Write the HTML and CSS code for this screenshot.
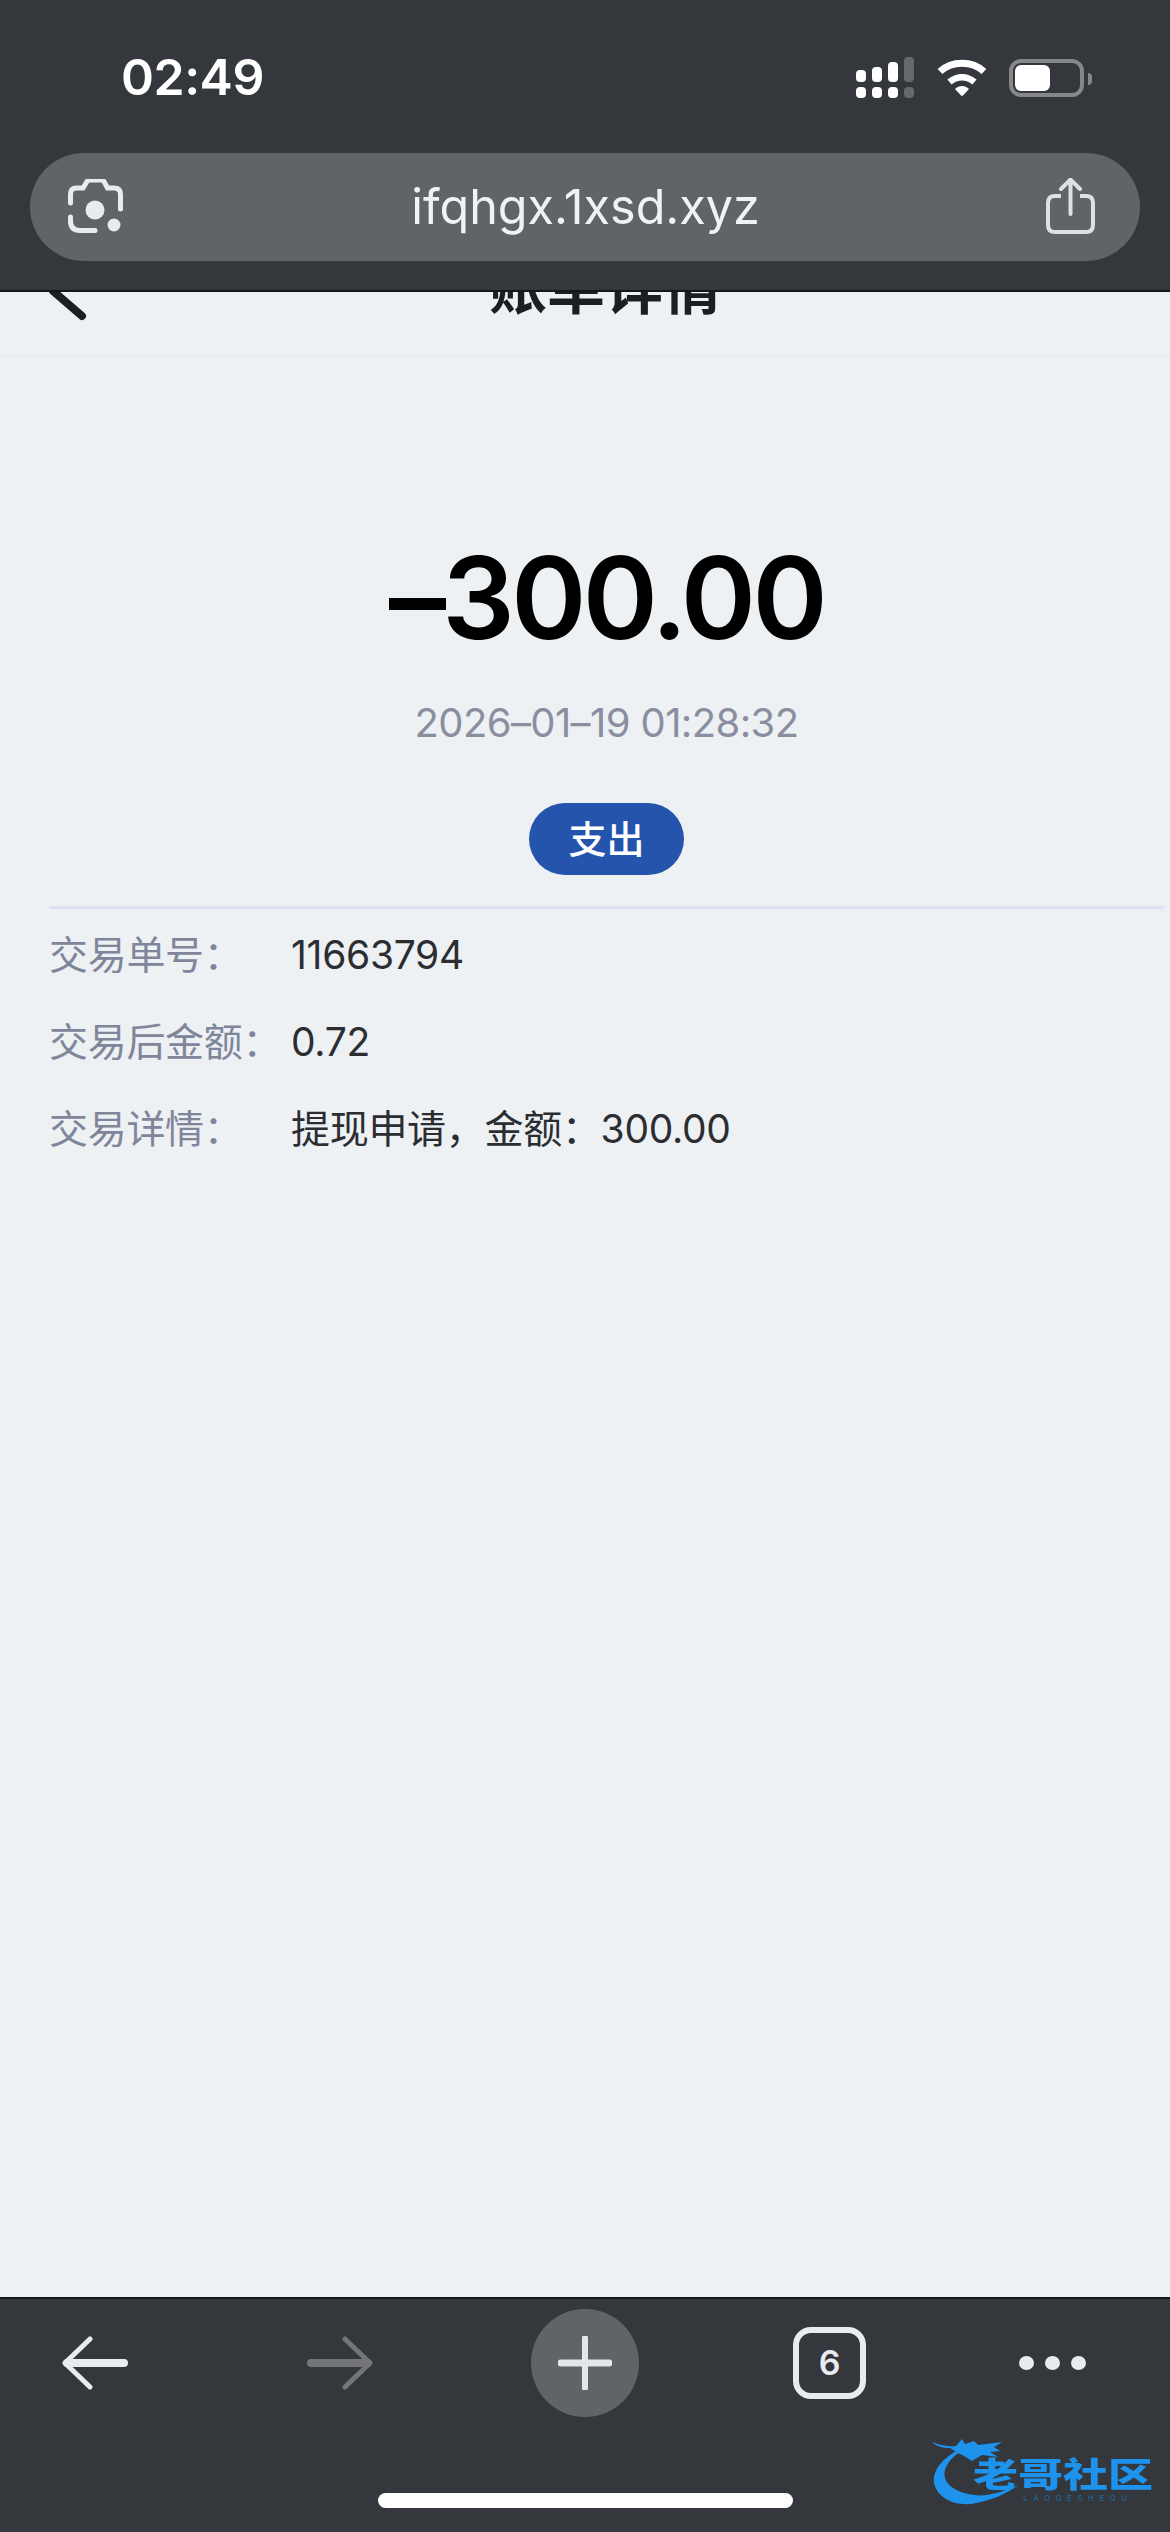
FILE: index.html
```html
<!DOCTYPE html>
<html lang="zh-CN">
<head>
    <meta charset="UTF-8">
    <meta name="viewport" content="width=device-width, initial-scale=1.0">
    <title>账单详情</title>
    <link rel="stylesheet" href="styles.css">
</head>
<body>
    <div class="phone">
        <header class="chrome-top">
            <div class="status-bar">
                <span class="clock">02:49</span>
                <div class="status-icons">
                    <svg class="signal" width="58" height="41" viewBox="0 0 58 41">
                        <rect x="0" y="13" width="10" height="12" rx="4" fill="#fff"/>
                        <rect x="16" y="10" width="10" height="15" rx="4" fill="#fff"/>
                        <rect x="32" y="5" width="10" height="20" rx="4" fill="#fff"/>
                        <rect x="48" y="0" width="10" height="25" rx="4" fill="#65686c"/>
                        <rect x="0" y="30" width="10" height="11" rx="4" fill="#fff"/>
                        <rect x="16" y="30" width="10" height="11" rx="4" fill="#fff"/>
                        <rect x="32" y="30" width="10" height="11" rx="4" fill="#fff"/>
                        <rect x="48" y="30" width="10" height="11" rx="4" fill="#65686c"/>
                    </svg>
                    <svg class="wifi" width="50" height="37" viewBox="0 0 50 37">
                        <path d="M3 12.5 C15 1.5 35 1.5 47 12.5" fill="none" stroke="#fff" stroke-width="7"/>
                        <path d="M12.5 23 C20 16.5 30 16.5 37.500 23" fill="none" stroke="#fff" stroke-width="6.500"/>
                        <path d="M18 30 C22 26 28 26 32 30 L26 36.500 Q25 37 24 36.500 Z" fill="#fff"/>
                    </svg>
                    <div class="battery">
                        <div class="battery-level"></div>
                    </div>
                </div>
            </div>
            <div class="url-bar">
                <svg class="lens" width="55" height="54" viewBox="0 0 55 54">
                    <path d="M2.500 24 V15 Q2.500 9 8.500 9 H15 L19 2.500 Q20 1 22 1 H33 Q35 1 36 2.500 L39.500 9 H46 Q52.500 9 52.500 15 V30" fill="none" stroke="#e8ebef" stroke-width="5" stroke-linecap="round"/>
                    <path d="M2.500 38 V42 Q2.500 51.500 12 51.500 H27" fill="none" stroke="#e8ebef" stroke-width="5" stroke-linecap="round"/>
                    <circle cx="27" cy="31" r="9.500" fill="#e8ebef"/>
                    <circle cx="46" cy="46" r="6.500" fill="#e8ebef"/>
                </svg>
                <span class="url">ifqhgx.1xsd.xyz</span>
                <svg class="share" width="49" height="56" viewBox="0 0 49 56">
                    <path d="M15 18 H9 Q2 18 2 25 V47 Q2 54 9 54 H40 Q47 54 47 47 V25 Q47 18 40 18 H34" fill="none" stroke="#dde0e4" stroke-width="4"/>
                    <path d="M24.500 36 V2 M15 11 L24.500 1.500 L34 11" fill="none" stroke="#dde0e4" stroke-width="4" stroke-linecap="round"/>
                </svg>
            </div>
        </header>

        <main class="content">
            <div class="nav-bar">
                <svg class="back-link" width="40" height="70" viewBox="0 0 40 70">
                    <path d="M34 10 L5 35 L34 60" fill="none" stroke="#1c1e22" stroke-width="8" stroke-linecap="round" stroke-linejoin="round"/>
                </svg>
                <h1 class="nav-title">账单详情</h1>
            </div>

            <section class="summary">
                <div class="amount">–300.00</div>
                <div class="time">2026–01–19 01:28:32</div>
                <span class="badge">支出</span>
            </section>

            <section class="details">
                <div class="row">
                    <span class="label">交易单号：</span>
                    <span class="value">11663794</span>
                </div>
                <div class="row">
                    <span class="label">交易后金额：</span>
                    <span class="value">0.72</span>
                </div>
                <div class="row">
                    <span class="label">交易详情：</span>
                    <span class="value">提现申请，金额：300.00</span>
                </div>
            </section>
        </main>

        <footer class="chrome-bottom">
            <div class="toolbar">
                <svg class="tool-back" width="66" height="54" viewBox="0 0 66 54">
                    <path d="M5 27 H62" fill="none" stroke="#e8ebef" stroke-width="8" stroke-linecap="round"/>
                    <path d="M28 3 L3 27 L28 51" fill="none" stroke="#e8ebef" stroke-width="5" stroke-linecap="round" stroke-linejoin="round"/>
                </svg>
                <svg class="tool-forward" width="66" height="54" viewBox="0 0 66 54">
                    <path d="M4 27 H61" fill="none" stroke="#737577" stroke-width="8" stroke-linecap="round"/>
                    <path d="M38 3 L63 27 L38 51" fill="none" stroke="#737577" stroke-width="5" stroke-linecap="round" stroke-linejoin="round"/>
                </svg>
                <div class="tool-new">
                    <svg width="54" height="54" viewBox="0 0 54 54">
                        <path d="M27 2 V52" fill="none" stroke="#e4e6e9" stroke-width="6" stroke-linecap="round"/>
                        <path d="M3 27 H51" fill="none" stroke="#e4e6e9" stroke-width="7" stroke-linecap="round"/>
                    </svg>
                </div>
                <div class="tool-tabs">6</div>
                <div class="tool-more">
                    <i></i><i></i><i></i>
                </div>
            </div>
            <div class="home-bar"></div>

            <div class="watermark">
                <svg class="watermark-dragon" width="100" height="76" viewBox="0 0 100 76">
                    <path d="M28 14 C8 24 0 38 2 48 C6 66 28 72 44 68 C60 65 72 60 87 50 C72 56 56 62 42 60 C20 57 8 46 14 32 C18 24 24 19 30 16 Z" fill="#1d93ee"/>
                    <path d="M0 7 C10 11 18 12 24 11 L30 4 L33 9 L42 6 L46 10 L70 7 L62 12 L68 16 L58 17 L66 22 L50 20 L40 26 L32 21 L26 18 L18 13 C10 13 4 11 0 7 Z" fill="#1d93ee"/>
                </svg>
                <span class="watermark-name">老哥社区</span>
                <span class="watermark-sub">LAOGESHEQU</span>
            </div>
        </footer>
    </div>
</body>
</html>
```

FILE: styles.css
```css
* {
    box-sizing: border-box;
}

body {
    margin: 0;
    padding: 0;
    font-family: 'Inter', 'Noto Sans CJK SC', sans-serif;
    background: #edf1f4;
}

.phone {
    width: 1170px;
    height: 2532px;
    display: flex;
    flex-direction: column;
    overflow: hidden;
}

/* browser top */
.chrome-top {
    height: 292px;
    flex-shrink: 0;
    background: #34373b;
    border-bottom: 2px solid #141618;
    padding: 57px 30px 0;
}

.status-bar {
    height: 41px;
    display: flex;
    justify-content: space-between;
    align-items: center;
    padding-left: 91px;
}

.clock {
    color: #fff;
    font-size: 50px;
    font-weight: 600;
    line-height: 41px;
    letter-spacing: -0.5px;
}

.status-icons {
    display: flex;
    align-items: center;
    padding-right: 56px;
}

.wifi {
    margin-left: 23px;
}

.battery {
    position: relative;
    width: 75px;
    height: 38px;
    margin-left: 22px;
    border: 4px solid #85878a;
    border-radius: 12px;
    padding: 2px;
}

.battery:after {
    content: "";
    position: absolute;
    left: 75px;
    top: 10px;
    width: 4px;
    height: 12px;
    background: #85878a;
    border-radius: 0 6px 6px 0;
}

.battery-level {
    width: 35px;
    height: 26px;
    background: #fff;
    border-radius: 6px;
}

.url-bar {
    height: 108px;
    margin-top: 55px;
    background: #5f6468;
    border-radius: 54px;
    display: flex;
    align-items: center;
    justify-content: space-between;
    padding: 0 45px 0 38px;
}

.url {
    color: #f1f2f3;
    font-size: 48.5px;
    line-height: 60px;
    margin-left: 2px;
}

.lens {
    margin-top: -2px;
}

.share {
    margin-top: -2px;
}

/* page */
.content {
    flex: 1;
    overflow: hidden;
    background: #edf1f4;
}

.nav-bar {
    height: 134px;
    margin-top: -68px;
    padding-left: 40px;
    padding-bottom: 12px;
    border-bottom: 3px solid #e8ebf1;
    display: flex;
    align-items: center;
    justify-content: center;
    position: relative;
}

.back-link {
    position: absolute;
    left: 48px;
    top: 32px;
}

.nav-title {
    margin: 0;
    font-size: 58px;
    font-weight: 700;
    color: #1c1e22;
}

.summary {
    padding-top: 183px;
    display: flex;
    flex-direction: column;
    align-items: center;
    margin-left: 49px;
    margin-right: 6px;
}

.amount {
    font-size: 114px;
    font-weight: 600;
    line-height: 114px;
    letter-spacing: -3.6px;
    color: #000;
}

.time {
    margin-top: 43px;
    font-size: 40px;
    line-height: 50px;
    letter-spacing: -0.6px;
    color: #8a8fa0;
}

.badge {
    margin-top: 55px;
    width: 155px;
    height: 72px;
    border-radius: 36px;
    background: #2554ac;
    color: #fff;
    font-size: 38px;
    font-weight: 500;
    line-height: 72px;
    text-align: center;
}

.details {
    margin: 31px 6px 0 49px;
    padding-top: 21px;
    border-top: 3px solid #dde2f1;
    display: flex;
    flex-direction: column;
    gap: 37px;
}

.row {
    display: flex;
    font-size: 39px;
    line-height: 50px;
    letter-spacing: -0.3px;
}

.label {
    width: 242px;
    color: #80869a;
}

.value {
    color: #2b2d31;
}

/* browser bottom */
.chrome-bottom {
    position: relative;
    height: 235px;
    flex-shrink: 0;
    background: #34373b;
    border-top: 2px solid #141618;
    padding-top: 10px;
}

.toolbar {
    height: 108px;
    display: flex;
    align-items: center;
    padding-left: 62px;
}

.tool-forward {
    margin-left: 179px;
}

.tool-new {
    width: 108px;
    height: 108px;
    margin-left: 158px;
    border-radius: 50%;
    background: #5f6468;
    display: flex;
    align-items: center;
    justify-content: center;
}

.tool-tabs {
    width: 73px;
    height: 72px;
    margin-left: 154px;
    border: 6px solid #e8ebef;
    border-radius: 18px;
    color: #e8ebef;
    font-size: 34px;
    font-weight: 600;
    line-height: 60px;
    text-align: center;
}

.tool-more {
    margin-left: 153px;
    display: flex;
    gap: 11px;
}

.tool-more i {
    width: 15px;
    height: 14px;
    border-radius: 50%;
    background: #e8ebef;
}

.home-bar {
    width: 415px;
    height: 15px;
    margin: 76px auto 0;
    background: #fff;
    border-radius: 8px;
}

/* site watermark over the screenshot */
.watermark {
    position: absolute;
    left: 932px;
    top: 136px;
    width: 225px;
    height: 78px;
    filter: blur(0.5px);
}

.watermark-dragon {
    position: absolute;
    left: 0;
    top: 0;
}

.watermark-name {
    position: absolute;
    left: 41px;
    top: 22px;
    font-size: 45px;
    font-weight: 900;
    line-height: 36px;
    white-space: nowrap;
    color: #1d93ee;
    transform: scaleY(0.75);
}

.watermark-sub {
    position: absolute;
    left: 91px;
    top: 58px;
    font-size: 8px;
    line-height: 10px;
    letter-spacing: 5.5px;
    white-space: nowrap;
    color: #1b6ea8;
}
```
